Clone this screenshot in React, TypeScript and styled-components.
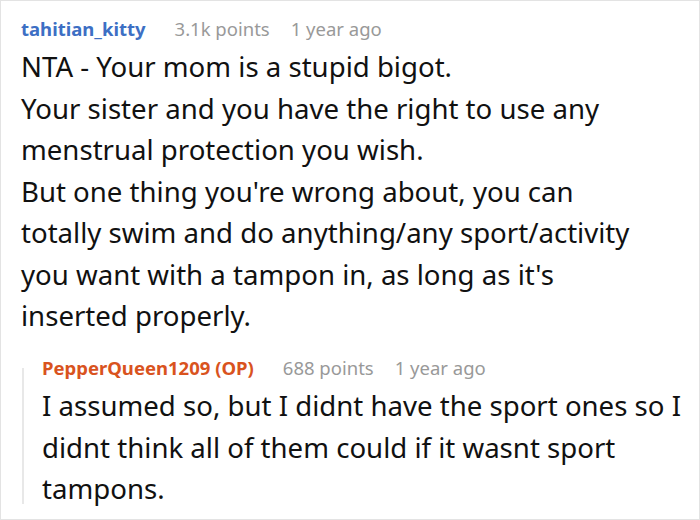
import React from "react";
import styled, { createGlobalStyle } from "styled-components";

const Global = createGlobalStyle`
  html, body {
    margin: 0;
    padding: 0;
    background: #fff;
  }
`;

type CommentData = {
  author: string;
  points: string;
  age: string;
  op?: boolean;
  /** lines as they break in the original post */
  lines: string[];
};

const Frame = styled.div`
  box-sizing: border-box;
  width: 700px;
  height: 520px;
  border: 1px solid #e3e3e3;
  padding: 11px 0 0 20px;
  overflow: hidden;
  font-family: "Noto Sans", "Open Sans", sans-serif;
  background: #fff;
`;

const Comment = styled.div`
  display: flex;
  flex-direction: column;
`;

const Meta = styled.div`
  display: flex;
  align-items: baseline;
  height: 34px;
  line-height: 34px;
  white-space: nowrap;
`;

const Author = styled.span<{ $op?: boolean }>`
  font-size: 18.5px;
  font-weight: 700;
  color: ${({ $op }) => ($op ? "#d9531e" : "#3d6fc4")};
  margin-right: 29px;
`;

const Info = styled.span`
  font-size: 18.5px;
  color: #999;
  margin-right: 21px;
`;

const Body = styled.div`
  font-size: 27.6px;
  line-height: 41.5px;
  color: #111;
  white-space: nowrap;
`;

const Replies = styled.div`
  position: relative;
  margin-top: 14.5px;
  padding-left: 21px;

  /* thread line, a bit shorter than the reply itself */
  &::before {
    content: "";
    position: absolute;
    left: 1px;
    top: 17px;
    bottom: 6px;
    width: 2px;
    background: #e8e8e8;
  }
`;

const comment: CommentData = {
  author: "tahitian_kitty",
  points: "3.1k points",
  age: "1 year ago",
  lines: [
    "NTA - Your mom is a stupid bigot.",
    "Your sister and you have the right to use any",
    "menstrual protection you wish.",
    "But one thing you're wrong about, you can",
    "totally swim and do anything/any sport/activity",
    "you want with a tampon in, as long as it's",
    "inserted properly.",
  ],
};

const reply: CommentData = {
  author: "PepperQueen1209 (OP)",
  points: "688 points",
  age: "1 year ago",
  op: true,
  lines: [
    "I assumed so, but I didnt have the sport ones so I",
    "didnt think all of them could if it wasnt sport",
    "tampons.",
  ],
};

const CommentView: React.FC<{ data: CommentData; children?: React.ReactNode }> = ({
  data,
  children,
}) => (
  <Comment>
    <Meta>
      <Author $op={data.op}>{data.author}</Author>
      <Info>{data.points}</Info>
      <Info>{data.age}</Info>
    </Meta>
    <Body>
      {data.lines.map((l, i) => (
        <div key={i}>{l}</div>
      ))}
    </Body>
    {children}
  </Comment>
);

export default function App() {
  return (
    <>
      <Global />
      <Frame>
        <CommentView data={comment}>
          <Replies>
            <CommentView data={reply} />
          </Replies>
        </CommentView>
      </Frame>
    </>
  );
}
